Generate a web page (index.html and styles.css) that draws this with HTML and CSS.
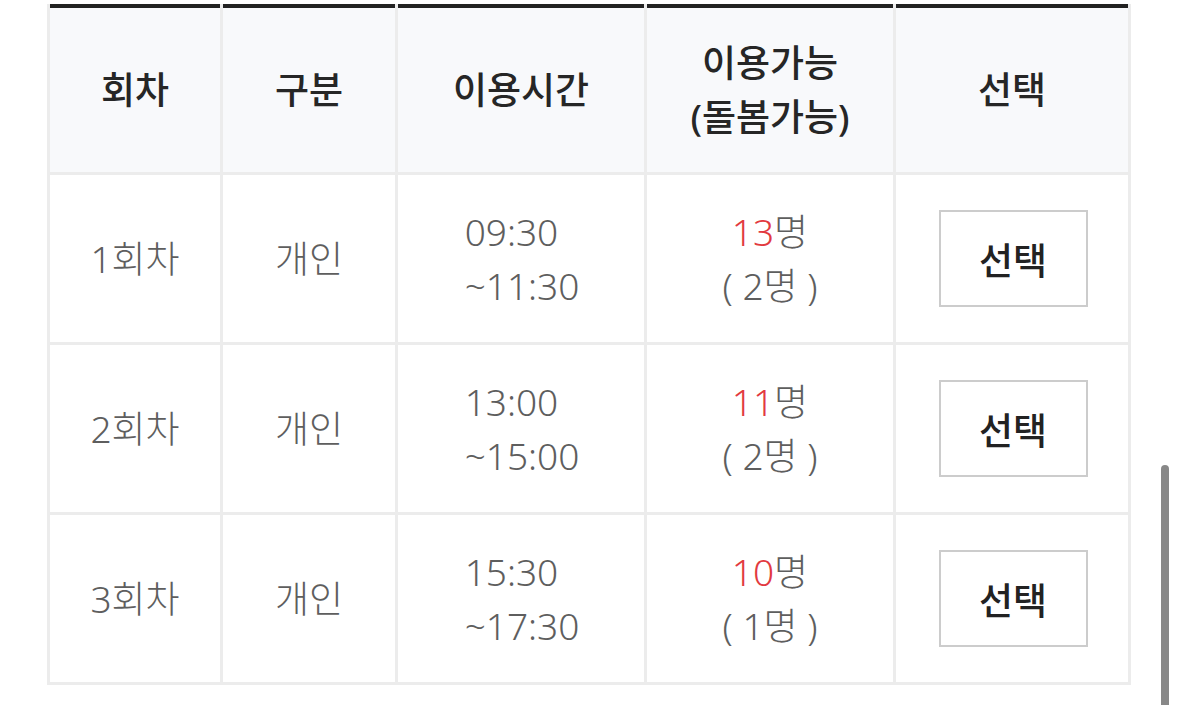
FILE: index.html
```html
<!DOCTYPE html>
<html lang="ko">
<head>
<meta charset="utf-8">
<link rel="stylesheet" href="styles.css">
</head>
<body>
<div class="wrap">
  <div class="table">
    <div class="th"><div>회차</div></div>
    <div class="th"><div>구분</div></div>
    <div class="th"><div>이용시간</div></div>
    <div class="th"><div>이용가능<br>(돌봄가능)</div></div>
    <div class="th"><div>선택</div></div>

    <div class="td"><div>1회차</div></div>
    <div class="td"><div>개인</div></div>
    <div class="td"><div class="time">09:30<br>~11:30</div></div>
    <div class="td"><div><span class="num">13</span>명<br>( 2명 )</div></div>
    <div class="td"><button class="btn">선택</button></div>

    <div class="td"><div>2회차</div></div>
    <div class="td"><div>개인</div></div>
    <div class="td"><div class="time">13:00<br>~15:00</div></div>
    <div class="td"><div><span class="num">11</span>명<br>( 2명 )</div></div>
    <div class="td"><button class="btn">선택</button></div>

    <div class="td"><div>3회차</div></div>
    <div class="td"><div>개인</div></div>
    <div class="td"><div class="time">15:30<br>~17:30</div></div>
    <div class="td"><div><span class="num">10</span>명<br>( 1명 )</div></div>
    <div class="td"><button class="btn">선택</button></div>
  </div>
</div>
<div class="scrollbar"></div>
</body>
</html>
```
FILE: styles.css
```css
html, body {
  margin: 0;
  padding: 0;
  background: #ffffff;
  overflow: hidden;
}
body {
  font-family: "Noto Sans", "Noto Sans CJK KR", sans-serif;
  width: 1179px;
  height: 705px;
  position: relative;
}
.wrap {
  padding: 4px 0 0 47px;
}
.table {
  display: grid;
  width: 1084px;
  box-sizing: border-box;
  grid-template-columns: 170px 172px 246px 246px 232px;
  grid-template-rows: 168px 167px 167px 167px;
  gap: 3px;
  padding: 0 3px 3px 3px;
  background: #ececec;
}
.th, .td {
  display: flex;
  align-items: center;
  justify-content: center;
  text-align: center;
  font-size: 37px;
  line-height: 54px;
}
.th {
  background: #f8f9fb;
  border-top: 4px solid #222222;
  color: #262626;
  font-weight: 500;
}
.td {
  background: #ffffff;
  color: #5e5e5e;
  font-weight: 300;
}
.time {
  text-align: left;
  margin-left: 2px;
}
.num {
  color: #e23a3f;
}
.btn {
  width: 149px;
  height: 97px;
  box-sizing: border-box;
  border: 2px solid #cccccc;
  background: #ffffff;
  color: #222222;
  font-family: inherit;
  font-size: 37px;
  font-weight: 500;
  padding: 0;
  margin-left: 2px;
}
.scrollbar {
  position: absolute;
  left: 1161px;
  top: 465px;
  width: 8px;
  height: 260px;
  border-radius: 4px;
  background: #888888;
}
```
